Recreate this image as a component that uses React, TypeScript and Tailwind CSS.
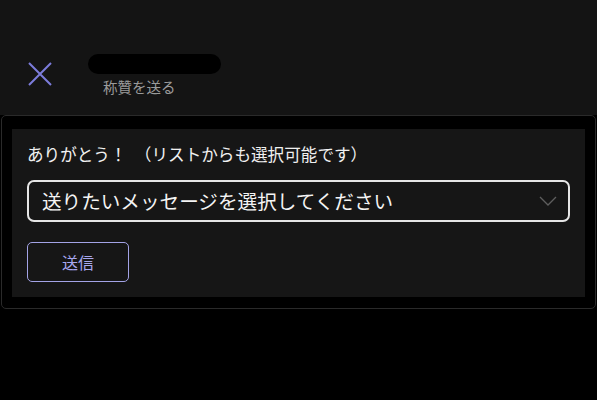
import React from "react";

export default function App() {
  return (
    <div className="w-[597px] h-[400px] bg-black font-['Noto_Sans_CJK_JP','Noto_Sans',sans-serif] overflow-hidden">
      <div className="h-[115px] bg-[#141414] flex items-start">
        <button className="ml-[28px] mt-[62px] w-[24px] h-[24px] flex items-center justify-center">
          <svg width="24" height="24" viewBox="0 0 24 24" fill="none">
            <path d="M1 1L23 23M23 1L1 23" stroke="#7c7cdb" strokeWidth="2" />
          </svg>
        </button>
        <div className="ml-[36px] mt-[54px] flex flex-col items-start">
          <div className="w-[133px] h-[20px] rounded-full bg-black" />
          <div className="ml-[15px] mt-[3px] text-[14.5px] leading-[20px] text-[#9b9b9b]">称贊を送る</div>
        </div>
      </div>
      <div className="mx-[1px] border border-[#2a2a2a] rounded-[5px] bg-black pt-[13px] pb-[11px] pl-[10px] pr-[10px]">
        <div className="bg-[#161616] px-[15px] pt-[13px] pb-[15px]">
          <div className="text-[16.6px] leading-[24px] text-[#f0f0f0]">ありがとう！　（リストからも選択可能です）</div>
          <div className="mt-[14px] h-[42px] border-2 border-[#e6e6e6] rounded-[7px] flex items-center justify-between pl-[13px] pr-[12px]">
            <span className="text-[19.6px] leading-[28px] text-[#f4f4f4]">送りたいメッセージを選択してください</span>
            <svg width="18" height="10" viewBox="0 0 18 10" fill="none" className="mr-[-1px]">
              <path d="M1 1L9 9L17 1" stroke="#5e5e5e" strokeWidth="1.3" />
            </svg>
          </div>
          <button className="mt-[20px] w-[102px] h-[40px] border-[1.5px] border-[#a3a3e6] rounded-[5px] text-[16px] text-[#a8a8f0] flex items-center justify-center">
            送信
          </button>
        </div>
      </div>
    </div>
  );
}
